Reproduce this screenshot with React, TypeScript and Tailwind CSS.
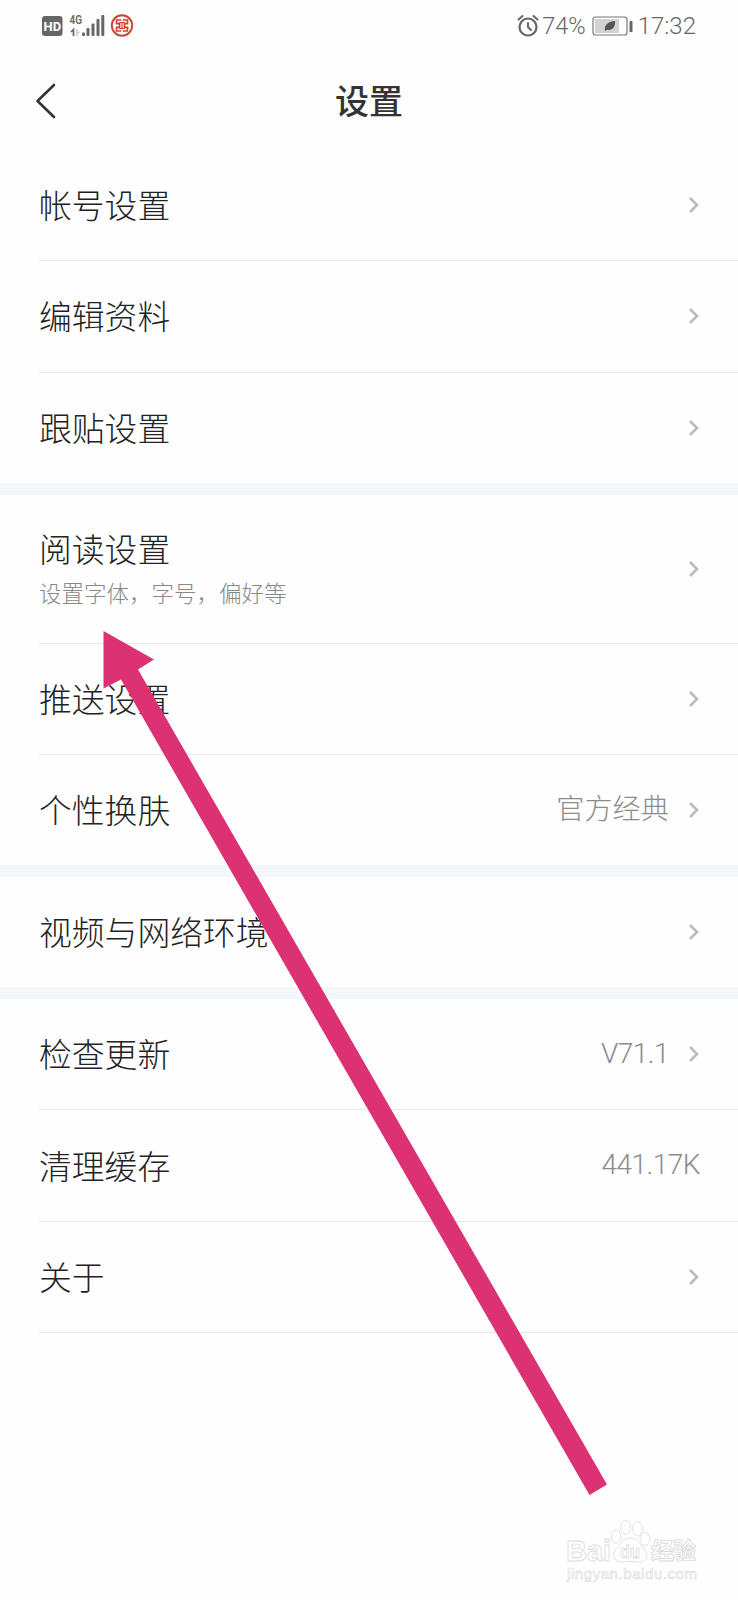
import React from 'react';

type Item = {
  label: string;
  hint?: string;
  value?: string;
  valueClass?: string;
  arrow?: boolean;
  height: string;
};

const latinValue = 'pb-px text-[28px] tracking-[-0.5px]';

const groups: Item[][] = [
  [
    { label: '帐号设置', arrow: true, height: 'h-[112px]' },
    { label: '编辑资料', arrow: true, height: 'h-[111.5px]' },
    { label: '跟贴设置', arrow: true, height: 'h-[110.5px]' },
  ],
  [
    { label: '阅读设置', hint: '设置字体，字号，偏好等', arrow: true, height: 'h-[149px]' },
    { label: '推送设置', arrow: true, height: 'h-[111px]' },
    { label: '个性换肤', value: '官方经典', valueClass: 'text-[28.2px]', arrow: true, height: 'h-[110px]' },
  ],
  [{ label: '视频与网络环境', arrow: true, height: 'h-[110px]' }],
  [
    { label: '检查更新', value: 'V71.1', valueClass: latinValue, arrow: true, height: 'h-[111px]' },
    { label: '清理缓存', value: '441.17K', valueClass: latinValue, height: 'h-[112px]' },
    { label: '关于', arrow: true, height: 'h-[111px]' },
  ],
];

const StatusBar = () => (
  <div className="flex h-[52px] items-center justify-between pl-[42px] pr-[42px] text-[#666]">
    <svg width="94" height="28" viewBox="42 12 94 28" className="font-['Roboto',sans-serif]">
      <rect x="42" y="16" width="20.5" height="20" rx="3" fill="#666" />
      <text x="52.3" y="30.7" fontSize="13.2" fontWeight="700" fill="#fff" textAnchor="middle" textLength="17.5" lengthAdjust="spacingAndGlyphs">HD</text>
      <text x="69.5" y="24.3" fontSize="13" fontWeight="600" fill="#666" textLength="12.5" lengthAdjust="spacingAndGlyphs">4G</text>
      <path d="M73.500 36v-6.500l-2.500 2.500" fill="none" stroke="#666" strokeWidth="1.7" />
      <path d="M77 29v7M77 32.500h2.500" stroke="#ccc" strokeWidth="1.5" />
      <g fill="#666">
        <rect x="82" y="32.5" width="3" height="3.5" rx="1" />
        <rect x="86.5" y="28" width="3" height="8" rx="1" />
        <rect x="91.5" y="23.5" width="3" height="12.5" rx="1" />
        <rect x="96.5" y="19" width="3" height="17" rx="1" />
        <rect x="101.3" y="15" width="3" height="21" rx="1" />
      </g>
      <g fill="none" stroke="#cf4433">
        <circle cx="122" cy="25.5" r="10.2" strokeWidth="1.9" />
        <path d="M121.300 20h-4.800v3.600h3v3.800h-3v3.600h4.800M122.700 20h4.800v3.600h-3v3.800h3v3.600h-4.800" strokeWidth="1.7" />
        <path d="M119 22.500h6M119 28.500h6M122 22.500v6" strokeWidth="1.2" />
      </g>
    </svg>
    <div className="flex items-center font-['Roboto',sans-serif] text-[24px] font-light leading-none">
      <svg width="22" height="24" viewBox="0 0 22 24" fill="none" stroke="#666" strokeLinecap="round">
        <circle cx="11" cy="13" r="8.5" strokeWidth="2.2" />
        <path d="M11 9v4l3 3M1.500 5.500l4-3.500M16.500 2l4 3.500" strokeWidth="2" />
      </svg>
      <span className="ml-[3px] pt-px text-[23.5px]">74%</span>
      <svg width="41" height="20" viewBox="0 0 41 20" className="ml-1.5">
        <rect x="1" y="1" width="34" height="18" rx="2.5" fill="none" stroke="#777" strokeWidth="1.2" />
        <rect x="3" y="3" width="24" height="14" fill="#d2d2d2" />
        <path d="M13 15c-1-6 3-9.500 10-10 .5 6.500-3 10-8 8.700z" fill="#555" />
        <rect x="37.5" y="5" width="3" height="11" rx="1" fill="#666" />
      </svg>
      <span className="ml-[5px]">17:32</span>
    </div>
  </div>
);

const Header = () => (
  <div className="grid h-[97px] grid-cols-3 items-center pl-[35px] pr-[35px]">
    <svg width="22" height="36" viewBox="0 0 22 36" fill="none" stroke="#333" strokeWidth="2.6" strokeLinecap="round" strokeLinejoin="round">
      <path d="M19 2L2.500 18 19 34" />
    </svg>
    <h1 className="pb-px text-center text-[34px] font-medium leading-none text-[#333]">设置</h1>
  </div>
);

const Chevron = () => (
  <svg width="12" height="18" viewBox="0 0 12 18" fill="none" stroke="#bbb" strokeWidth="2.6" className="ml-[19px]">
    <path d="M2 2l7 7-7 7" />
  </svg>
);

const Row = ({ item, last }: { item: Item; last: boolean }) => (
  <div className={`ml-[39px] flex items-center justify-between pr-[38px] ${item.height} ${last ? '' : 'border-b border-[#e8e8e8]'}`}>
    <div className={item.hint ? 'pt-[2px]' : 'pb-[2px]'}>
      <div className="text-[32.8px] font-light leading-[44px] text-[#222]">{item.label}</div>
      {item.hint && <div className="text-[22.5px] font-light leading-[44px] text-[#888]">{item.hint}</div>}
    </div>
    <div className="flex items-center">
      {item.value && (
        <span className={`font-['Roboto','Noto_Sans_CJK_SC',sans-serif] font-light leading-none text-[#8c8c8c] ${item.valueClass}`}>
          {item.value}
        </span>
      )}
      {item.arrow && <Chevron />}
    </div>
  </div>
);

const Watermark = () => (
  <svg width="140" height="70" viewBox="562 1516 140 70" className="absolute left-[562px] top-[1516px] font-['Liberation_Sans','Noto_Sans_CJK_SC',sans-serif]" fill="#fff" stroke="#dcdcdc" strokeWidth="0.9">
    <text x="566" y="1561" fontSize="30" fontWeight="700" textLength="45" lengthAdjust="spacingAndGlyphs">Bai</text>
    <ellipse cx="616" cy="1536.5" rx="4.8" ry="6.8" />
    <ellipse cx="625.5" cy="1527.5" rx="5" ry="7" />
    <ellipse cx="637.5" cy="1528.5" rx="5" ry="7" />
    <ellipse cx="645" cy="1539" rx="5" ry="6.5" />
    <path d="M630 1538c-8 0-8 6-13 10-7 7-2 15 6 14 5-1 9-1 14 0 9 1 13-6 7-13-5-5-6-11-14-11z" />
    <text x="620" y="1558" fontSize="19" fontWeight="700" textLength="20" lengthAdjust="spacingAndGlyphs">du</text>
    <text x="651" y="1559" fontSize="23" fontWeight="700" textLength="45">经验</text>
    <text x="567" y="1579" fontSize="15" strokeWidth="0.6" textLength="130">jingyan.baidu.com</text>
  </svg>
);

export default function App() {
  return (
    <div className="relative h-[1600px] w-[738px] overflow-hidden bg-[#fefefe] font-['Noto_Sans_CJK_SC',sans-serif]">
      <StatusBar />
      <Header />
      {groups.map((items, g) => (
        <div key={g} className={g > 0 ? 'border-t-[12px] border-[#f4f7f9]' : ''}>
          {items.map((item, i) => (
            <Row key={item.label} item={item} last={i === items.length - 1 && g < groups.length - 1} />
          ))}
        </div>
      ))}
      <svg className="absolute left-0 top-0" width="738" height="1600" viewBox="0 0 738 1600">
        <path d="M103.500 631L154 659.500 138 669.500 607 1484.500 589.500 1495 121 679.500 103.500 688.500z" fill="#dc3274" />
      </svg>
      <Watermark />
    </div>
  );
}
